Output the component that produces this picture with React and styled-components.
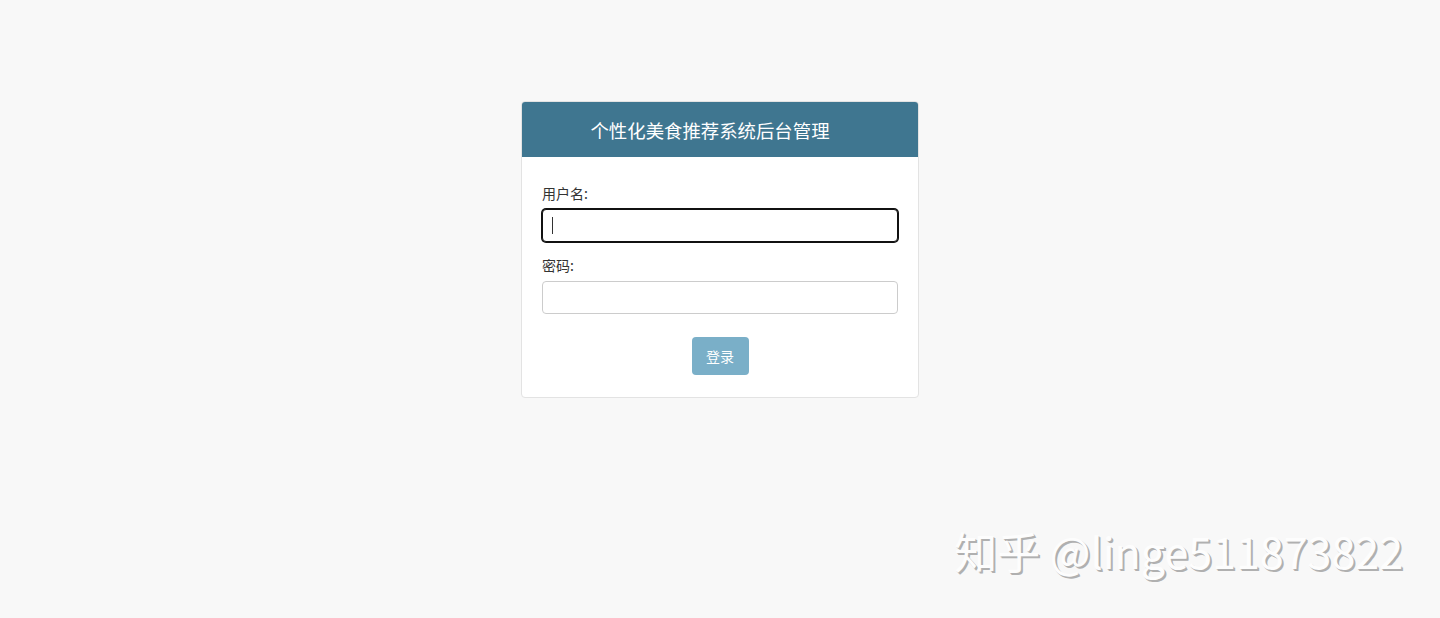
import React from 'react';
import styled, { createGlobalStyle } from 'styled-components';

const GlobalStyle = createGlobalStyle`
    html, body {
        margin: 0;
        padding: 0;
        background: #f8f8f8;
        font-family: "Open Sans", "Noto Sans CJK SC", sans-serif;
    }
`;

const Page = styled.div`
    position: relative;
    width: 1440px;
    height: 618px;
    overflow: hidden;
    display: flex;
    justify-content: center;
    align-items: flex-start;
    padding-top: 101px;
    box-sizing: border-box;
`;

const Panel = styled.div`
    width: 398px;
    background: #fff;
    border: 1px solid #e3e3e3;
    border-radius: 4px;
    box-sizing: border-box;
    overflow: hidden;
`;

const Header = styled.div`
    height: 55px;
    background: #3f7690;
    color: #fff;
    display: flex;
    align-items: center;
    justify-content: center;
    padding-right: 20px;
    font-family: "Noto Sans CJK SC", sans-serif;
    font-size: 18.4px;
`;

const Body = styled.form`
    padding: 26px 20px 22px;
`;

const Group = styled.div`
    margin-bottom: ${props => props.last ? '23px' : '13px'};
`;

const Label = styled.label`
    display: block;
    font-family: "Noto Sans CJK SC", sans-serif;
    font-size: 14px;
    line-height: 20px;
    color: #333;
    margin-bottom: 6px;
`;

const Input = styled.input`
    display: block;
    width: 100%;
    height: 33px;
    box-sizing: border-box;
    border: 1px solid ${props => props.focused ? '#111' : '#ccc'};
    box-shadow: ${props => props.focused ? '0 0 0 1px #111' : 'none'};
    border-radius: 4px;
    padding: 6px 10px;
    font-size: 14px;
    outline: none;
`;

const Field = styled.div`
    position: relative;
`;

const Caret = styled.span`
    position: absolute;
    left: 10px;
    top: 8px;
    width: 1px;
    height: 17px;
    background: #333;
`;

const Actions = styled.div`
    display: flex;
    justify-content: center;
`;

const Button = styled.button`
    width: 57px;
    height: 38px;
    border: none;
    border-radius: 4px;
    background: #7aafc8;
    color: #fff;
    font-family: "Noto Sans CJK SC", sans-serif;
    font-size: 14px;
    cursor: pointer;
`;

const Watermark = styled.div`
    position: absolute;
    right: 37px;
    bottom: 46px;
    font-family: "Noto Sans CJK SC", sans-serif;
    font-size: 43px;
    line-height: 1;
    color: #fdfdfd;
    text-shadow: 2px 2px 0 #b0b0b0, 1px 1px 0 #c8c8c8;
    white-space: nowrap;
`;

export default function App() {
    return (
        <>
            <GlobalStyle />
            <Page>
                <Panel>
                    <Header>个性化美食推荐系统后台管理</Header>
                    <Body onSubmit={e => e.preventDefault()}>
                        <Group>
                            <Label>用户名:</Label>
                            <Field>
                                <Input focused readOnly />
                                <Caret />
                            </Field>
                        </Group>
                        <Group last>
                            <Label>密码:</Label>
                            <Input type="password" readOnly />
                        </Group>
                        <Actions>
                            <Button type="submit">登录</Button>
                        </Actions>
                    </Body>
                </Panel>
                <Watermark>知乎 @linge511873822</Watermark>
            </Page>
        </>
    );
}
